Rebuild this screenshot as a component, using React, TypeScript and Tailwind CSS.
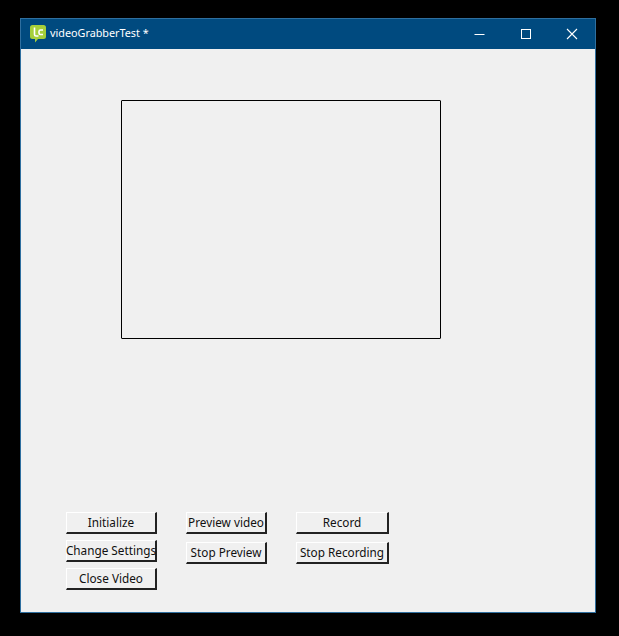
const font = "[font-family:'Noto_Sans','Open_Sans',sans-serif]";

function Btn({ label, w }: { label: string; w: string }) {
  return (
    <button
      className={`${w} h-[22px] flex items-center justify-center whitespace-nowrap bg-[#f0f0f0] border-t border-l border-t-white border-l-white border-r-2 border-b-2 border-r-[#222222] border-b-[#222222] text-[11.75px] leading-none text-[#111111] ${font}`}
    >
      {label}
    </button>
  );
}

export default function App() {
  return (
    <div className="w-[619px] h-[636px] bg-black pt-[18px] pl-[20px]">
      <div className={`w-[576px] h-[595px] flex flex-col border border-[#2f6f9f] bg-[#f0f0f0] ${font}`}>
        <div className="h-[30px] shrink-0 flex items-center bg-[#004a7f] text-white">
          <svg className="ml-[9px] mt-[-1px]" width="16" height="18" viewBox="0 0 16 18">
            <path d="M2.500 0h11A2.500 2.500 0 0 1 16 2.500v9a2.500 2.500 0 0 1-2.500 2.500H8l-3 3.500V14H2.500A2.500 2.500 0 0 1 0 11.500v-9A2.500 2.500 0 0 1 2.500 0z" fill="#a6cf3a" />
            <path d="M4.500 2.500v7a1.500 1.500 0 0 0 1.500 1.500h2.500M13 5H10.500A1.500 1.500 0 0 0 9 6.500v1.500A1.500 1.500 0 0 0 10.500 9.500H13" fill="none" stroke="#ffffff" strokeWidth="1.600" />
          </svg>
          <span className="ml-[4px] mt-[-2px] text-[10.8px] leading-none">videoGrabberTest *</span>
          <div className="ml-auto flex items-center">
            <svg width="12" height="12" viewBox="0 0 12 12" className="mr-[34px]">
              <path d="M0.500 6.500h10" stroke="#ffffff" strokeWidth="1" />
            </svg>
            <svg width="12" height="12" viewBox="0 0 12 12" className="mr-[34px]">
              <rect x="1.500" y="1.500" width="9" height="9" fill="none" stroke="#ffffff" strokeWidth="1" />
            </svg>
            <svg width="12" height="12" viewBox="0 0 12 12" className="mr-[17px]">
              <path d="M1 1l10 10M11 1L1 11" stroke="#ffffff" strokeWidth="1.100" />
            </svg>
          </div>
        </div>
        <div className="flex-1 flex flex-col">
          <div className="ml-[100px] mt-[51px] w-[320px] h-[239px] border border-black rounded-[1px]" />
          <div className="ml-[45px] mt-[173px] flex items-start">
            <div className="flex flex-col gap-[6px] w-[91px]">
              <Btn label="Initialize" w="w-[91px]" />
              <Btn label="Change Settings" w="w-[91px]" />
              <Btn label="Close Video" w="w-[91px]" />
            </div>
            <div className="ml-[29px] flex flex-col gap-[8px] w-[81px]">
              <Btn label="Preview video" w="w-[81px]" />
              <Btn label="Stop Preview" w="w-[81px]" />
            </div>
            <div className="ml-[29px] flex flex-col gap-[8px] w-[93px]">
              <Btn label="Record" w="w-[93px]" />
              <Btn label="Stop Recording" w="w-[93px]" />
            </div>
          </div>
        </div>
      </div>
    </div>
  );
}
